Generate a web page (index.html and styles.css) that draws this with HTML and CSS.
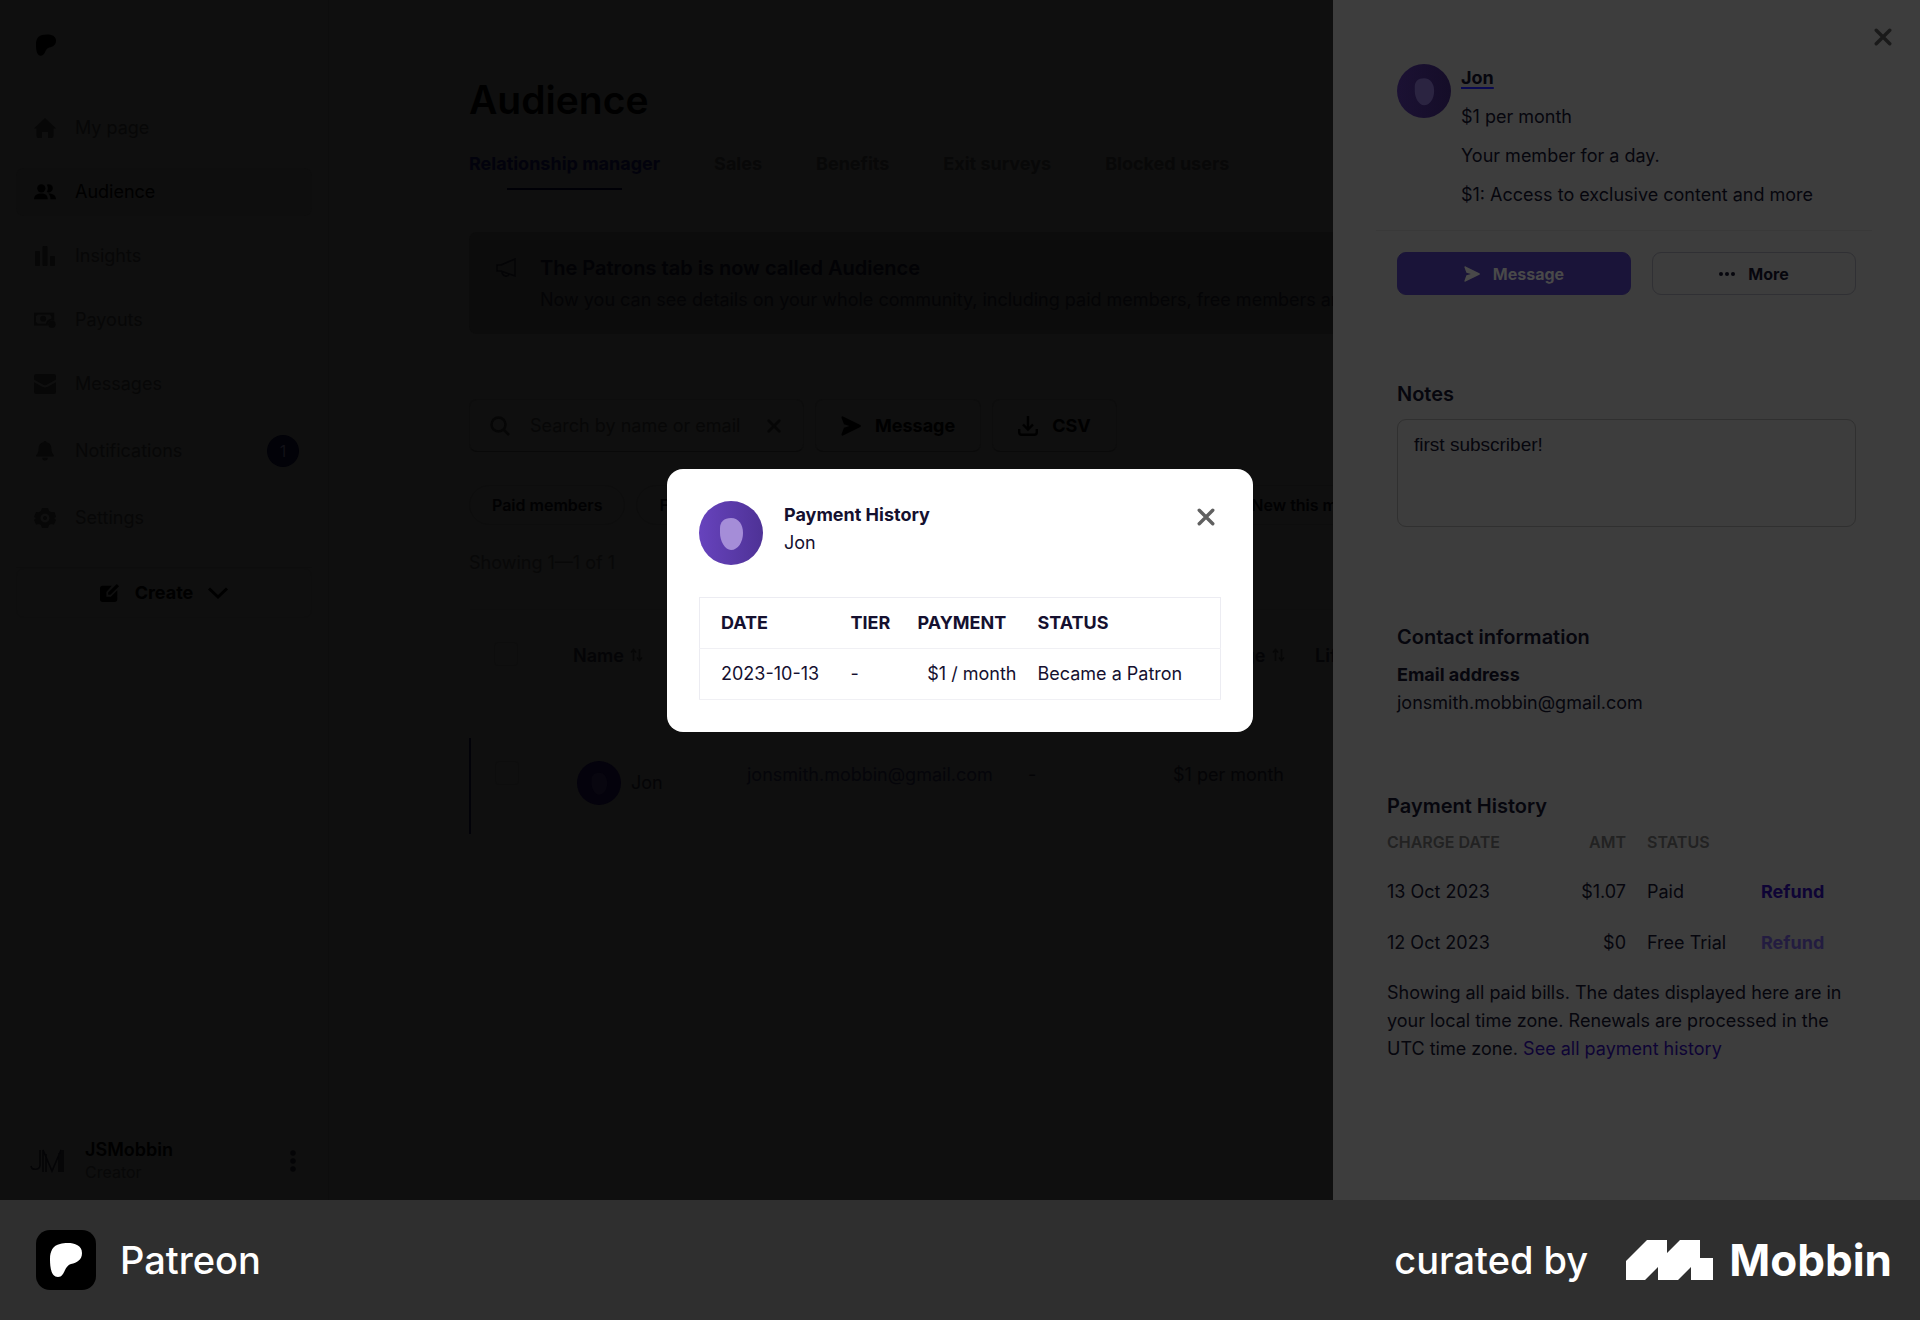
FILE: index.html
```html
<!DOCTYPE html>
<html lang="en">
<head>
    <meta charset="UTF-8">
    <meta name="viewport" content="width=device-width, initial-scale=1">
    <title>Audience</title>
    <link rel="stylesheet" href="styles.css">
</head>
<body>
<!-- shared icons -->
<svg class="sprite" aria-hidden="true">
    <symbol id="patreon" viewBox="0 0 32 34">
        <path d="M10 1C18-1 32-.5 32 10c0 7-5 9.500-11 11-7 2-6 13-13 13C1 34 0 24 0 16 0 8 3 2.500 10 1z"/>
    </symbol>
    <symbol id="send" viewBox="0 0 20 20">
        <path d="M2 .5 19.300 9.100a1 1 0 0 1 0 1.800L2 19.500C1 20 .2 19 .6 18l2.400-6.300 5.500-1.700L3 8.300.6 2C.2 1 1 0 2 .5z"/>
    </symbol>
    <symbol id="close" viewBox="0 0 20 20">
        <path d="M2.500 2.500l15 15M17.500 2.500l-15 15" fill="none" stroke="currentColor" stroke-width="3.800" stroke-linecap="round"/>
    </symbol>
    <symbol id="face" viewBox="0 0 64 64">
        <path d="M21 27c0-6 4-10 11-10 8 0 12 7 12 15 0 9-5 17-12 17-6 0-11-9-11-17z"/>
    </symbol>
    <symbol id="sort" viewBox="0 0 13 14">
        <path d="M3.500 13V2M1 4.500 3.500 1.500 6 4.500M9.500 1v11M7 9.500l2.500 3 2.500-3" fill="none" stroke="currentColor" stroke-width="1.500"/>
    </symbol>
</svg>

<div class="stage">
    <nav class="sidebar">
        <a class="logo" href="#" aria-label="Home"><svg><use href="#patreon"/></svg></a>
        <ul class="nav">
            <li><a href="#">
                <svg viewBox="0 0 22 20"><path d="M11 0 0 10.500h2.500V18a2 2 0 0 0 2 2H8v-6h6v6h3.500a2 2 0 0 0 2-2v-7.500H22z"/></svg>
                <span>My page</span></a></li>
            <li><a class="on" href="#">
                <svg viewBox="0 0 24 18"><circle cx="8" cy="5" r="4.500"/><path d="M0 17c0-5 4-6.500 8-6.500s7 1.500 7 6.500z"/><path d="M14 9a4.500 4.500 0 1 0 0-8c1.500 2.500 1.500 5.500 0 8zM15.500 10.500c2 1.500 2.500 4 2.500 6.500h6c0-5-4-6.500-8.500-6.500z"/></svg>
                <span>Audience</span></a></li>
            <li><a href="#">
                <svg viewBox="0 0 20 20"><rect y="5" width="5" height="15" rx="1"/><rect x="7.500" width="5" height="20" rx="1"/><rect x="15" y="10" width="5" height="10" rx="1"/></svg>
                <span>Insights</span></a></li>
            <li><a href="#">
                <svg viewBox="0 0 24 18"><path fill-rule="evenodd" d="M0 1h22v8.500a5 5 0 0 0-7 5.500H0zM2 5v6l2 2h9a7 7 0 0 1 6-5.500V5l-2-2H4z"/><circle cx="10" cy="7.500" r="3.200"/><circle cx="19.500" cy="13.500" r="4"/></svg>
                <span>Payouts</span></a></li>
            <li><a href="#">
                <svg viewBox="0 0 20 18"><path d="M2 0h16a2 2 0 0 1 2 2v3l-8 4.500c-1.500.8-2.500.8-4 0L0 5V2a2 2 0 0 1 2-2z"/><path d="M0 7.500 7.500 11.500c2 1 3 1 5 0L20 7.500V16a2 2 0 0 1-2 2H2a2 2 0 0 1-2-2z"/></svg>
                <span>Messages</span></a></li>
            <li><a class="tall" href="#">
                <svg viewBox="0 0 20 22"><path d="M10 0c1 0 1.500.7 1.500 1.500C15 2 17 5 17 8.500c0 4 1 5 2.500 7 .6.800.2 1.500-.5 1.500H1c-.700 0-1.100-.7-.5-1.500 1.500-2 2.500-3 2.500-7C3 5 5 2 8.500 1.500 8.500.7 9 0 10 0zM7 18.500h6a3 3 0 0 1-6 0z"/></svg>
                <span>Notifications</span><b class="badge">1</b></a></li>
            <li><a href="#">
                <svg viewBox="0 0 22 20"><path fill-rule="evenodd" d="M8 0h6l1 3 2.500 1.200L20.500 4 22 9l-2 1 2 2-2 4.500-3-.500-2 1-1 3H8l-1-3-2-1-3 .5L0 12l2-2-2-1 2-5 3 .2L7 3zM11 5.500a4.500 4.500 0 1 0 0 9 4.500 4.500 0 0 0 0-9zM11 8a2 2 0 1 1 0 4 2 2 0 0 1 0-4z"/></svg>
                <span>Settings</span></a></li>
        </ul>
        <button class="create" type="button">
            <svg viewBox="0 0 22 20"><path d="M3 2h10L7 9v5h5l7-7v10a3 3 0 0 1-3 3H3a3 3 0 0 1-3-3V5a3 3 0 0 1 3-3z"/><path d="M18.500 0 21 2.500 11.500 12H9V9.500z"/></svg>
            Create
            <svg viewBox="0 0 20 12"><path d="M1 1.500l9 8.500 9-8.500" fill="none" stroke="currentColor" stroke-width="3"/></svg>
        </button>
        <div class="profile">
            <svg class="initials" viewBox="0 0 34 24" aria-hidden="true"><path d="M10 1v15c0 5-8 6-9 1M13 23V1l9 21L31 1v22M16 23V5M29 23V4M33 1v22" fill="none" stroke="currentColor" stroke-width="1.500"/></svg>
            <div class="who"><b>JSMobbin</b><small>Creator</small></div>
            <button class="dots" type="button" aria-label="Account menu">
                <svg viewBox="0 0 6 22"><circle cx="3" cy="3" r="2.700"/><circle cx="3" cy="11" r="2.700"/><circle cx="3" cy="19" r="2.700"/></svg>
            </button>
        </div>
    </nav>

    <main class="main">
        <h1>Audience</h1>
        <div class="tabs">
            <a class="on" href="#">Relationship manager</a>
            <a href="#">Sales</a>
            <a href="#">Benefits</a>
            <a href="#">Exit surveys</a>
            <a href="#">Blocked users</a>
        </div>
        <section class="banner">
            <svg viewBox="0 0 20 20"><path d="M19 1v17L5 13H1V7h4zM6 13.500c0 5 6 6 7 2.500" fill="none" stroke="currentColor" stroke-width="1.500"/></svg>
            <div>
                <h2>The Patrons tab is now called Audience</h2>
                <p>Now you can see details on your whole community, including paid members, free members and</p>
            </div>
        </section>
        <div class="tools">
            <div class="search">
                <svg viewBox="0 0 20 20"><path d="M8.500 1.500a7 7 0 1 1 0 14 7 7 0 0 1 0-14zM13.500 13.500l5.500 5.500" fill="none" stroke="currentColor" stroke-width="2.500"/></svg>
                <input type="text" placeholder="Search by name or email" aria-label="Search by name or email">
                <button type="button" aria-label="Clear"><svg><use href="#close"/></svg></button>
            </div>
            <button class="btn" type="button"><svg><use href="#send"/></svg>Message</button>
            <button class="btn" type="button"><svg viewBox="0 0 20 20"><path d="M10 0v13M5 8.500l5 5 5-5M1.200 13v3c0 1.500 1 2.800 2.500 2.800h12.600c1.500 0 2.500-1.300 2.500-2.800v-3" fill="none" stroke="currentColor" stroke-width="2.400"/></svg>CSV</button>
        </div>
        <div class="chips">
            <button type="button">Paid members</button>
            <button type="button">Free members</button>
            <button class="new" type="button">New this month</button>
        </div>
        <p class="count">Showing 1—1 of 1</p>
        <table class="members">
            <thead>
            <tr>
                <th class="c-check"><input type="checkbox" aria-label="Select all"></th>
                <th class="c-name">Name <svg><use href="#sort"/></svg></th>
                <th class="c-email"></th>
                <th class="c-tier"></th>
                <th class="c-pledge">Pledge <svg><use href="#sort"/></svg></th>
                <th>Lifetime</th>
            </tr>
            </thead>
            <tbody>
            <tr>
                <td><input type="checkbox" aria-label="Select Jon"></td>
                <td><div class="member"><svg class="avatar"><use href="#face"/></svg>Jon</div></td>
                <td><a href="#">jonsmith.mobbin@gmail.com</a></td>
                <td>-</td>
                <td>$1 per month</td>
                <td></td>
            </tr>
            </tbody>
        </table>
    </main>

    <aside class="drawer">
        <button class="drawer-close" type="button" aria-label="Close"><svg><use href="#close"/></svg></button>
        <section class="person">
            <svg class="avatar"><use href="#face"/></svg>
            <div>
                <a href="#">Jon</a>
                <p>$1 per month</p>
                <p>Your member for a day.</p>
                <p>$1: Access to exclusive content and more</p>
            </div>
        </section>
        <div class="actions">
            <button class="primary" type="button"><svg><use href="#send"/></svg>Message</button>
            <button type="button"><svg viewBox="0 0 16 16"><circle cx="2" cy="8" r="2"/><circle cx="8" cy="8" r="2"/><circle cx="14" cy="8" r="2"/></svg>More</button>
        </div>
        <section class="notes">
            <h3><label for="notes">Notes</label></h3>
            <textarea id="notes">first subscriber!</textarea>
        </section>
        <section class="contact">
            <h3>Contact information</h3>
            <b>Email address</b>
            <p>jonsmith.mobbin@gmail.com</p>
        </section>
        <section class="bills">
            <h3>Payment History</h3>
            <table>
                <thead>
                <tr><th class="b-date">Charge date</th><th class="b-amt">Amt</th><th class="b-status">Status</th><th></th></tr>
                </thead>
                <tbody>
                <tr><td>13 Oct 2023</td><td class="b-amt">$1.07</td><td>Paid</td><td><button type="button">Refund</button></td></tr>
                <tr><td>12 Oct 2023</td><td class="b-amt">$0</td><td>Free Trial</td><td><button type="button" disabled>Refund</button></td></tr>
                </tbody>
            </table>
            <p>Showing all paid bills. The dates displayed here are in your local time zone. Renewals are processed in the UTC time zone. <a href="#">See all payment history</a></p>
        </section>
    </aside>

    <div class="overlay">
        <div class="modal" role="dialog" aria-labelledby="modal-title">
            <header>
                <svg class="avatar"><use href="#face"/></svg>
                <div>
                    <h2 id="modal-title">Payment History</h2>
                    <p>Jon</p>
                </div>
                <button type="button" aria-label="Close"><svg><use href="#close"/></svg></button>
            </header>
            <table>
                <thead>
                <tr><th class="m-date">Date</th><th class="m-tier">Tier</th><th class="m-pay">Payment</th><th>Status</th></tr>
                </thead>
                <tbody>
                <tr><td>2023-10-13</td><td>-</td><td class="m-pay-value">$1 / month</td><td>Became a Patron</td></tr>
                </tbody>
            </table>
        </div>
    </div>
</div>

<footer class="credit">
    <span class="app-icon"><svg><use href="#patreon"/></svg></span>
    <span class="app-name">Patreon</span>
    <span class="by">curated by</span>
    <svg class="mobbin" viewBox="0 0 87 40" aria-hidden="true"><path d="M0 21 21 0h20v13L54 0h20v18h13v22H65V27L52 40H32V27L19 40H0z"/></svg>
    <span class="mobbin-name">Mobbin</span>
</footer>
</body>
</html>
```
FILE: styles.css
```css
* {
    box-sizing: border-box;
    margin: 0;
    padding: 0;
}
body {
    display: flex;
    flex-direction: column;
    min-height: 100vh;
    font-family: Inter, "Liberation Sans", sans-serif;
    font-size: 18px;
    line-height: 28px;
    background: #0f0f0f;
    color: #040406;
}
ul {
    list-style: none;
}
a {
    color: inherit;
    text-decoration: none;
}
button, input, textarea {
    font: inherit;
    color: inherit;
    background: none;
    border: 0;
}
button {
    cursor: pointer;
}
svg {
    fill: currentColor;
    flex: none;
}
table {
    border-collapse: collapse;
    table-layout: fixed;
}
th, td {
    text-align: left;
}
.sprite {
    position: absolute;
    width: 0;
    height: 0;
}
.stage {
    position: relative;
    display: flex;
    flex: 1;
    overflow: hidden;
}
.avatar {
    border-radius: 50%;
}

/* sidebar */
.sidebar {
    display: flex;
    flex-direction: column;
    width: 329px;
    flex: none;
    padding: 34px 16px 17px;
    border-right: 1px solid #0d0d0d;
}
.logo {
    padding-left: 20px;
    height: 22px;
    color: #000;
}
.logo svg {
    display: block;
    width: 20px;
    height: 22px;
}
.nav {
    display: flex;
    flex-direction: column;
    gap: 16px;
    margin-top: 48px;
    padding-bottom: 25px;
    border-bottom: 1px solid #0d0d0d;
}
.nav a {
    display: flex;
    align-items: center;
    gap: 19px;
    height: 48px;
    padding: 0 13px 0 18px;
    border-radius: 8px;
    color: #070707;
}
.nav a.tall {
    height: 54px;
}
.nav a.on {
    background: #0e0e0e;
    color: #000;
}
.nav svg {
    width: 22px;
    height: 20px;
}
.badge {
    display: flex;
    align-items: center;
    justify-content: center;
    width: 32px;
    height: 32px;
    margin-left: auto;
    border-radius: 50%;
    background: #020208;
    color: #111117;
    font-size: 16px;
    font-weight: 400;
}
.create {
    display: flex;
    align-items: center;
    justify-content: center;
    gap: 15px;
    height: 50px;
    border: 1px solid #0e0e0e;
    border-radius: 8px;
    font-weight: 700;
    color: #000;
}
.create svg {
    width: 20px;
    height: 20px;
}
.profile {
    display: flex;
    align-items: center;
    margin-top: auto;
    padding: 0 16px 0 14px;
}
.initials {
    width: 34px;
    height: 24px;
}
.who {
    flex: 1;
    margin-left: 21px;
    line-height: 22px;
}
.who b {
    display: block;
    font-weight: 600;
    color: #000;
}
.who small {
    font-size: 16px;
    color: #080808;
}
.dots svg {
    display: block;
    width: 6px;
    height: 22px;
}

/* audience page */
.main {
    flex: 1;
    min-width: 0;
    padding: 72px 120px 0 140px;
    white-space: nowrap;
}
h1 {
    font-size: 39px;
    font-weight: 600;
    line-height: 56px;
    color: #000;
}
.tabs {
    display: flex;
    gap: 54px;
    margin-top: 22px;
    font-weight: 700;
    color: #080808;
}
.tabs .on {
    color: #02020c;
}
.tabs .on::after {
    content: "";
    display: block;
    width: 60%;
    height: 2px;
    margin: 10px auto 0;
    background: #000006;
}
.banner {
    display: flex;
    gap: 24px;
    margin-top: 42px;
    padding: 22px 27px 20px;
    border-radius: 8px;
    background: #0c0c0c;
    overflow: hidden;
}
.banner svg {
    width: 20px;
    height: 20px;
    margin-top: 4px;
}
.banner h2 {
    margin-bottom: 4px;
    font-size: 20px;
    font-weight: 600;
    line-height: 28px;
    color: #020205;
}
.tools {
    display: flex;
    gap: 11px;
    margin-top: 65px;
}
.search {
    display: flex;
    align-items: center;
    gap: 20px;
    width: 335px;
    height: 53px;
    padding: 0 22px 0 20px;
    border: 1px solid #0d0d0d;
    border-bottom-color: #090909;
    border-radius: 8px;
    color: #060606;
}
.search svg {
    display: block;
    width: 20px;
    height: 20px;
}
.search input {
    flex: 1;
    min-width: 0;
}
.search input::placeholder {
    color: #070707;
    opacity: 1;
}
.search button svg {
    width: 14px;
    height: 14px;
}
.btn {
    display: flex;
    align-items: center;
    gap: 14px;
    height: 53px;
    padding: 0 25px;
    border: 1px solid #0d0d0d;
    border-bottom-color: #0a0a0a;
    border-radius: 8px;
    font-weight: 700;
    color: #000;
}
.btn svg {
    width: 20px;
    height: 20px;
}
.chips {
    display: flex;
    gap: 11px;
    margin-top: 33px;
}
.chips button {
    height: 40px;
    padding: 0 22px;
    border: 1px solid #0d0d0d;
    border-radius: 20px;
    font-size: 16px;
    font-weight: 600;
    color: #010102;
}
.chips .new {
    margin-left: 424px;
}
.count {
    margin-top: 24px;
    color: #080808;
}
.members {
    width: 1000px;
    margin-top: 32px;
}
.members th {
    height: 128px;
    padding-top: 32px;
    vertical-align: top;
    font-weight: 600;
    border-top: 1px solid #0e0e0e;
}
.members td {
    height: 96px;
    padding-top: 23px;
    vertical-align: top;
}
.members tbody tr {
    border-left: 2px solid #020208;
}
.members th svg {
    width: 13px;
    height: 14px;
    margin-left: 2px;
    color: #070707;
}
.members input {
    appearance: none;
    display: block;
    width: 24px;
    height: 24px;
    margin-left: 24px;
    border: 1px solid #0d0d0d;
    border-radius: 4px;
}
.members a {
    color: #05050a;
}
.c-check {
    width: 103px;
}
.c-name {
    width: 174px;
}
.c-email {
    width: 281px;
}
.c-tier {
    width: 145px;
}
.members .c-pledge {
    width: 142px;
    padding-right: 30px;
    text-align: right;
}
.member {
    display: flex;
    align-items: center;
    gap: 10px;
    padding-left: 4px;
}
.member .avatar {
    width: 44px;
    height: 44px;
    background: #04020c;
    color: #08060f;
}

/* member drawer */
.drawer {
    position: absolute;
    top: 0;
    right: 0;
    bottom: 0;
    width: 587px;
    padding: 64px 64px 0;
    background: #3d3d3d;
    color: #06060d;
    overflow: hidden;
}
.drawer-close {
    position: absolute;
    top: 28px;
    right: 28px;
}
.drawer-close svg {
    display: block;
    width: 18px;
    height: 18px;
    color: #1a1a1a;
}
.person {
    display: flex;
    gap: 10px;
    margin: 0 -16px 0 -21px;
    padding: 0 0 21px 21px;
    border-bottom: 1px solid #393939;
}
.person .avatar {
    width: 54px;
    height: 54px;
    background: linear-gradient(90deg, #1b1133, #150d28);
    color: #2b2441;
}
.person a {
    font-weight: 700;
    text-decoration: underline #0a0a50 2px;
    text-underline-offset: 3px;
}
.person p {
    margin-top: 11px;
}
.actions {
    display: grid;
    grid-template-columns: 234fr 204fr;
    gap: 21px;
    margin-top: 21px;
}
.actions button {
    display: flex;
    align-items: center;
    justify-content: center;
    gap: 13px;
    height: 43px;
    border: 1px solid #303034;
    border-radius: 9px;
    font-size: 16px;
    font-weight: 700;
}
.actions .primary {
    border-color: #1a1439;
    background: #1a1439;
    color: #494949;
}
.actions svg {
    width: 16px;
    height: 16px;
}
h3 {
    font-size: 20px;
    font-weight: 600;
    line-height: 28px;
}
.notes {
    margin-top: 85px;
}
.notes textarea {
    display: block;
    width: 100%;
    height: 108px;
    margin-top: 11px;
    padding: 11px 16px;
    border: 1px solid #303030;
    border-radius: 9px;
    font-family: "Liberation Sans", Arial, sans-serif;
    font-size: 19px;
    resize: none;
}
.contact {
    margin-top: 96px;
}
.contact b {
    display: block;
    margin-top: 10px;
}
.bills {
    margin: 75px 0 0 -10px;
}
.bills table {
    width: 100%;
}
.bills th {
    height: 46px;
    padding-top: 8px;
    vertical-align: top;
    font-size: 16px;
    font-weight: 600;
    text-transform: uppercase;
    color: #222;
}
.bills td {
    height: 51px;
}
.bills .b-date {
    width: 140px;
}
.bills th.b-amt {
    width: 120px;
}
.bills .b-amt {
    padding-right: 21px;
    text-align: right;
}
.bills .b-status {
    width: 114px;
}
.bills button {
    font-weight: 700;
    color: #0e0435;
}
.bills button:disabled {
    color: #231c40;
}
.bills > p {
    margin-top: 11px;
}
.bills a {
    color: #0e0435;
}

/* payment history dialog */
.overlay {
    position: absolute;
    inset: 0;
    display: flex;
    align-items: center;
    justify-content: center;
}
.modal {
    width: 586px;
    padding: 32px;
    border-radius: 16px;
    background: #fff;
    color: #15102f;
}
.modal header {
    display: flex;
    gap: 21px;
}
.modal .avatar {
    width: 64px;
    height: 64px;
    background: linear-gradient(90deg, #6743bd, #4e3296);
    color: #a58dd8;
}
.modal h2 {
    font-size: 18px;
    font-weight: 700;
    line-height: 28px;
}
.modal header button {
    align-self: flex-start;
    margin: 7px 6px 0 auto;
    color: #606060;
}
.modal header button svg {
    display: block;
    width: 18px;
    height: 18px;
}
.modal table {
    width: 100%;
    margin-top: 32px;
    border: 1px solid #ececf2;
}
.modal tr {
    border-bottom: 1px solid #f0f0f4;
}
.modal th, .modal td {
    height: 51px;
}
.modal th {
    font-weight: 700;
    text-transform: uppercase;
}
.modal th:first-child, .modal td:first-child {
    padding-left: 21px;
}
.m-date {
    width: 151px;
}
.m-tier {
    width: 67px;
}
.m-pay {
    width: 120px;
}
.modal .m-pay-value {
    padding-right: 21px;
    text-align: right;
}

/* bottom bar */
.credit {
    display: flex;
    align-items: center;
    height: 120px;
    padding: 0 28px 0 36px;
    background: #2f2f2f;
    color: #fff;
    font-size: 38px;
    font-weight: 500;
    line-height: 48px;
}
.app-icon {
    display: flex;
    align-items: center;
    justify-content: center;
    width: 60px;
    height: 60px;
    border-radius: 14px;
    background: #000;
}
.app-icon svg {
    width: 32px;
    height: 34px;
}
.app-name {
    margin-left: 24px;
}
.by {
    margin-left: auto;
}
.mobbin {
    width: 87px;
    height: 40px;
    margin: 0 16px 0 38px;
}
.mobbin-name {
    font-size: 44px;
    font-weight: 700;
}
```
